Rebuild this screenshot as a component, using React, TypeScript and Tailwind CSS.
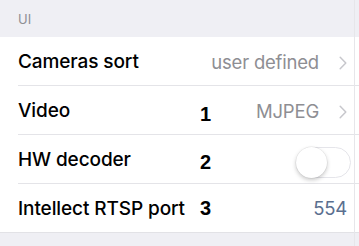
import React from "react";

const Chevron = () => (
  <svg width="8" height="14" viewBox="0 0 8 14" className="ml-[20px]">
    <path d="M1.2 1.2 L6.8 7 L1.2 12.8" fill="none" stroke="#c7c7cc" strokeWidth="1.5" strokeLinecap="round" strokeLinejoin="round" />
  </svg>
);

const Num = ({ n, top }: { n: string; top: string }) => (
  <span
    className={`absolute left-[200px] ${top} text-[20px] leading-[20px] font-bold text-black`}
    style={{ fontFamily: '"Liberation Sans", Arial, sans-serif' }}
  >
    {n}
  </span>
);

export default function App() {
  return (
    <div
      className="w-[359px] h-[246px] bg-[#efeff4] relative overflow-hidden"
      style={{ fontFamily: 'Inter, "Noto Sans", sans-serif' }}
    >
      <div className="h-[37px] flex items-end pl-[18px] pb-[8px] text-[13px] text-[#8e8e93]">UI</div>
      <div className="bg-white border-b border-[#e2e2e6]">
        <div className="relative h-[49px] flex items-center pl-[18px]">
          <div className="flex-1 h-full flex items-center border-b border-[#e4e4e8] pr-[12px] pt-[3px]">
            <span className="flex-1 text-[19px] font-medium text-black tracking-[-0.1px]">Cameras sort</span>
            <span className="text-[18.5px] text-[#8e8e93] tracking-[-0.2px]">user defined</span>
            <Chevron />
          </div>
        </div>
        <div className="relative h-[49px] flex items-center pl-[18px]">
          <div className="flex-1 h-full flex items-center border-b border-[#e4e4e8] pr-[12px] pt-[3px]">
            <span className="flex-1 text-[19px] font-medium text-black tracking-[-0.1px]">Video</span>
            <span className="text-[18.5px] text-[#8e8e93] tracking-[-0.2px]">MJPEG</span>
            <Chevron />
          </div>
          <Num n="1" top="top-[18px]" />
        </div>
        <div className="relative h-[49px] flex items-center pl-[18px]">
          <div className="flex-1 h-full flex items-center border-b border-[#e4e4e8] pr-[8px] pt-[3px]">
            <span className="flex-1 text-[19px] font-medium text-black tracking-[-0.1px]">HW decoder</span>
            <div className="w-[55px] h-[31px] mt-[3px] rounded-full border-[1.5px] border-[#e5e5ea] bg-white relative">
              <div className="absolute left-[-1px] top-[-1px] w-[31px] h-[31px] rounded-full bg-white shadow-[0_2px_4px_rgba(0,0,0,0.22),0_0_0_0.5px_rgba(0,0,0,0.08)]" />
            </div>
          </div>
          <Num n="2" top="top-[17px]" />
        </div>
        <div className="relative h-[48px] flex items-center pl-[18px]">
          <div className="flex-1 h-full flex items-center pr-[12px] pt-[2px]">
            <span className="flex-1 text-[19px] font-medium text-black tracking-[-0.1px]">Intellect RTSP port</span>
            <span className="text-[18.5px] text-[#5b6f8f] tracking-[-0.2px]">554</span>
          </div>
          <Num n="3" top="top-[14px]" />
        </div>
      </div>
      <div className="absolute right-[4px] top-0 h-full w-px bg-[#e6e6ea]" />
    </div>
  );
}
